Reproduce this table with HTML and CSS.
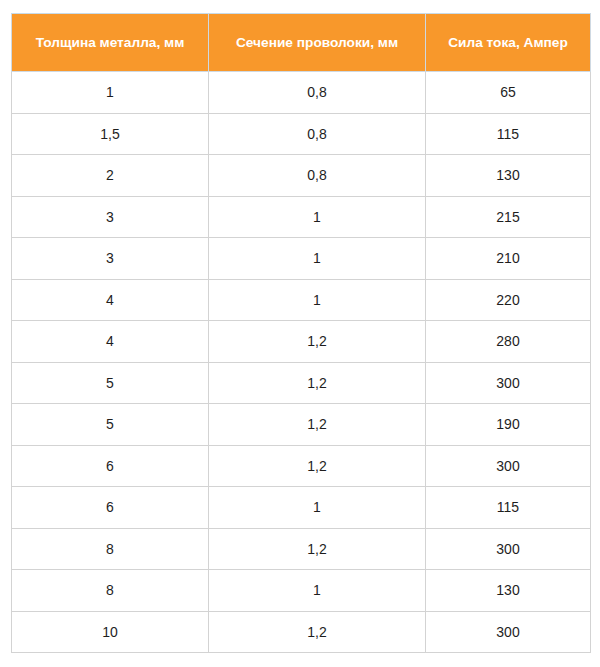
FILE: index.html
```html
<!DOCTYPE html>
<html lang="ru">
<head>
<meta charset="utf-8">
<link rel="stylesheet" href="styles.css">
</head>
<body>
<table class="data">
<colgroup><col class="c1"><col class="c2"><col class="c3"></colgroup>
<thead>
<tr><th>Толщина металла, мм</th><th>Сечение проволоки, мм</th><th>Сила тока, Ампер</th></tr>
</thead>
<tbody>
<tr><td>1</td><td>0,8</td><td>65</td></tr>
<tr><td>1,5</td><td>0,8</td><td>115</td></tr>
<tr><td>2</td><td>0,8</td><td>130</td></tr>
<tr><td>3</td><td>1</td><td>215</td></tr>
<tr><td>3</td><td>1</td><td>210</td></tr>
<tr><td>4</td><td>1</td><td>220</td></tr>
<tr><td>4</td><td>1,2</td><td>280</td></tr>
<tr><td>5</td><td>1,2</td><td>300</td></tr>
<tr><td>5</td><td>1,2</td><td>190</td></tr>
<tr><td>6</td><td>1,2</td><td>300</td></tr>
<tr><td>6</td><td>1</td><td>115</td></tr>
<tr><td>8</td><td>1,2</td><td>300</td></tr>
<tr><td>8</td><td>1</td><td>130</td></tr>
<tr><td>10</td><td>1,2</td><td>300</td></tr>
</tbody>
</table>
</body>
</html>
```
FILE: styles.css
```css
html, body { margin: 0; padding: 0; background: #fff; }
body { padding: 13px 0 0 11px; font-family: "Liberation Sans", Arial, sans-serif; }
.data {
  border-collapse: collapse;
  table-layout: fixed;
  width: 579px;
}
.c1 { width: 197px; }
.c2 { width: 217px; }
.c3 { width: 165px; }
.data th {
  background: #f8982b;
  color: #fff;
  font-weight: bold;
  font-size: 13.7px;
  height: 57px;
  padding: 0;
  text-align: center;
  vertical-align: middle;
  border: 1px solid #cfd9e2;
  border-top-color: #c8dbe8;
}
.data td {
  height: 40.5px;
  padding: 0;
  text-align: center;
  vertical-align: middle;
  font-size: 14px;
  color: #1e1e1e;
  border: 1px solid #d3d3d3;
}
```
